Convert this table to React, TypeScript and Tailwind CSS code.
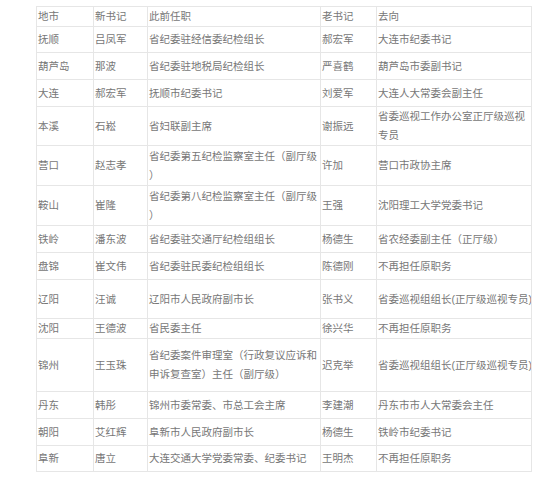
import React from "react";

type Row = { h: number; c: [string, string, string, string, string] };

const rows: Row[] = [
  { h: 20, c: ["地市", "新书记", "此前任职", "老书记", "去向"] },
  { h: 26, c: ["抚顺", "吕凤军", "省纪委驻经信委纪检组长", "郝宏军", "大连市纪委书记"] },
  { h: 27, c: ["葫芦岛", "那波", "省纪委驻地税局纪检组长", "严喜鹤", "葫芦岛市委副书记"] },
  { h: 27, c: ["大连", "郝宏军", "抚顺市纪委书记", "刘爱军", "大连人大常委会副主任"] },
  { h: 39, c: ["本溪", "石崧", "省妇联副主席", "谢振远", "省委巡视工作办公室正厅级巡视专员"] },
  { h: 40, c: ["营口", "赵志孝", "省纪委第五纪检监察室主任（副厅级）", "许加", "营口市政协主席"] },
  { h: 40, c: ["鞍山", "崔隆", "省纪委第八纪检监察室主任（副厅级）", "王强", "沈阳理工大学党委书记"] },
  { h: 27, c: ["铁岭", "潘东波", "省纪委驻交通厅纪检组组长", "杨德生", "省农经委副主任（正厅级）"] },
  { h: 27, c: ["盘锦", "崔文伟", "省纪委驻民委纪检组组长", "陈德刚", "不再担任原职务"] },
  { h: 39, c: ["辽阳", "汪诚", "辽阳市人民政府副市长", "张书义", "省委巡视组组长(正厅级巡视专员)"] },
  { h: 19, c: ["沈阳", "王德波", "省民委主任", "徐兴华", "不再担任原职务"] },
  { h: 53, c: ["锦州", "王玉珠", "省纪委案件审理室（行政复议应诉和申诉复查室）主任（副厅级）", "迟克举", "省委巡视组组长(正厅级巡视专员)"] },
  { h: 27, c: ["丹东", "韩彤", "锦州市委常委、市总工会主席", "李建潮", "丹东市市人大常委会主任"] },
  { h: 27, c: ["朝阳", "艾红辉", "阜新市人民政府副市长", "杨德生", "铁岭市纪委书记"] },
  { h: 26, c: ["阜新", "唐立", "大连交通大学党委常委、纪委书记", "王明杰", "不再担任原职务"] },
];

export default function App() {
  return (
    <div className="w-[550px] h-[477px] bg-white pt-[6px] pl-[36px]">
      <table
        className="w-[495px] table-fixed border-collapse text-[10.5px] leading-[19px] text-[#777777]"
        style={{ fontFamily: '"Liberation Sans", "Noto Sans CJK SC", sans-serif' }}
      >
        <colgroup>
          <col className="w-[57px]" />
          <col className="w-[54px]" />
          <col className="w-[173px]" />
          <col className="w-[56px]" />
          <col className="w-[155px]" />
        </colgroup>
        <tbody>
          {rows.map((r, i) => (
            <tr key={i} style={{ height: r.h }}>
              {r.c.map((t, j) => (
                <td
                  key={j}
                  className={
                    t.includes("(")
                      ? "border border-[#e6e6e6] pl-[1px] pr-0 py-0 align-middle whitespace-nowrap overflow-hidden"
                      : "border border-[#e6e6e6] pl-[1px] pr-0 py-0 align-middle [line-break:anywhere]"
                  }
                >
                  {t}
                </td>
              ))}
            </tr>
          ))}
        </tbody>
      </table>
    </div>
  );
}
